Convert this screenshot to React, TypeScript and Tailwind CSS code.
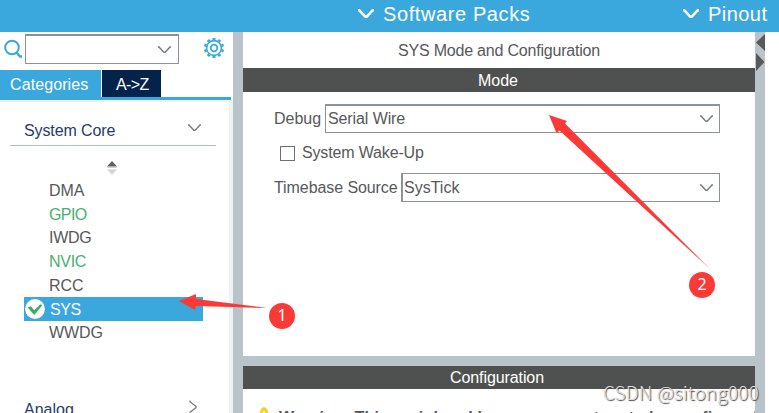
import type { ReactNode } from 'react';

function Chevron({ className, width = 13, stroke = 1.4 }: { className: string; width?: number; stroke?: number }) {
  return (
    <svg className={`shrink-0 ${className}`} width={width} height={(width * 8) / 13} viewBox="0 0 13 8" fill="none" stroke="currentColor" strokeWidth={stroke}>
      <path d="M0 1h1L5.6 5.9Q6.5 6.8 7.4 5.9L12 1h1" />
    </svg>
  );
}

function Select({ value, className }: { value: string; className: string }) {
  return (
    <div className={`flex h-[29px] shrink-0 items-center justify-between border border-[#8b9298] bg-white pr-[6px] pl-[2px] ${className}`}>
      <span>{value}</span>
      <Chevron className="text-[#77797a]" />
    </div>
  );
}

function Header() {
  return (
    <header className="flex h-8 shrink-0 bg-[#3aa8dc] text-[20px] leading-[29px] whitespace-nowrap text-white">
      <div className="flex w-[683px] pl-[358px]">
        <Chevron className="mt-[9px] mr-[9px]" width={16} stroke={2.1} />
        <span className="tracking-[0.6px]">Software Packs</span>
      </div>
      <Chevron className="mt-[9px] mr-[9px]" width={16} stroke={2.1} />
      <span className="tracking-[0.45px]">Pinout</span>
    </header>
  );
}

const teeth = Array.from({ length: 10 }, (_, i) => i * 36);

function Toolbar() {
  return (
    <div className="flex h-[38px] shrink-0 pt-[2px]">
      <svg className="mt-[5px] ml-[3px]" width="21" height="21" viewBox="0 0 21 21" fill="none" stroke="#3aa8dc" strokeWidth="2">
        <circle cx="9" cy="8.5" r="6.8" />
        <path d="M13.5 13.5L17 17.5h2" strokeWidth="2.3" />
      </svg>
      <div className="ml-px flex h-[30px] w-[154px] items-center justify-end border-[#8b9298] pr-[7px] [border-width:2px_1px_1px_1px] border-solid">
        <Chevron className="text-[#77797a]" />
      </div>
      <svg className="mt-[4px] ml-[25px]" width="20" height="20" viewBox="-10 -10 20 20" fill="none" stroke="#3aa8dc" strokeWidth="1.6">
        <circle r="7.4" />
        <circle r="3.3" strokeWidth="1.8" />
        {teeth.map((a) => (
          <path key={a} d="M-1.5-9h3" strokeWidth="2.2" transform={`rotate(${a})`} />
        ))}
      </svg>
    </div>
  );
}

function Check() {
  return (
    <svg className="shrink-0" width="20" height="20" viewBox="0 0 20 20">
      <circle cx="10" cy="10" r="9.9" fill="#fff" />
      <path d="M2.7 8.5l3.2-1.2 3.3 4 6.2-6.1 1.7 1.2-7.8 9.5z" fill="#3aaa64" />
    </svg>
  );
}

function Item({ children, className = 'text-[#57585a]' }: { children: ReactNode; className?: string }) {
  return <li className={`h-[23.7px] pl-[49px] ${className}`}>{children}</li>;
}

function Sidebar() {
  return (
    <aside className="flex w-[233px] shrink-0 flex-col">
      <Toolbar />
      <div className="flex h-[27px] w-[231px] shrink-0 leading-[29px]">
        <div className="w-[101px] bg-[#3aa8dc] pl-[10px] tracking-[0.1px] text-white">Categories</div>
        <div className="ml-px w-[59px] bg-[#03234b] pl-[14px] tracking-[-0.6px] text-white">A-&gt;Z</div>
      </div>
      <div className="h-[3px] w-[231px] shrink-0 bg-[#3aa8dc]" />
      <div className="flex min-h-0 flex-1 flex-col border-t-2 border-r-4 border-[#eef2f4]">
        <div className="ml-[10px] flex h-[44px] w-[206px] shrink-0 items-start justify-between border-b border-[#b0bdc6] pt-[18px] pr-[15px] pl-[14px] text-[#293a69]">
          <span className="leading-[22px] tracking-[-0.1px]">System Core</span>
          <Chevron className="mt-[4px] text-[#77797a]" />
        </div>
        <svg className="mt-[14px] ml-[107px] shrink-0" width="10" height="15" viewBox="0 0 10 15">
          <path d="M5 1L10 6.5H0z" fill="#5d5f60" />
          <path d="M0 7h10v1H0zM0 9.5h10L5 14.5z" fill="#d4d4d4" />
        </svg>
        <ul className="mt-[4px] shrink-0 leading-[23px] tracking-[-0.1px]">
          <Item>DMA</Item>
          <Item className="tracking-[-0.6px] text-[#48b06e]">GPIO</Item>
          <Item className="tracking-[-0.3px] text-[#57585a]">IWDG</Item>
          <Item className="tracking-[-0.3px] text-[#48b06e]">NVIC</Item>
          <Item>RCC</Item>
          <li className="ml-6 flex h-6 w-[179px] items-center bg-[#3aa8dc] pl-px text-white">
            <Check />
            <span className="ml-[5px] tracking-[-0.4px]">SYS</span>
          </li>
          <Item>WWDG</Item>
        </ul>
        <div className="mt-[53px] flex h-6 shrink-0 justify-between pr-[31px] pl-6 text-[#293a69]">
          <span className="leading-6">Analog</span>
          <svg className="mt-[2px]" width="9" height="14" viewBox="0 0 9 14" fill="none" stroke="#77797a" strokeWidth="1.3">
            <path d="M1 .5v1.2L6.8 6.3Q7.6 7 6.8 7.7L1 12.3v1.2" />
          </svg>
        </div>
      </div>
    </aside>
  );
}

function Main() {
  return (
    <main className="flex w-[512px] shrink-0 flex-col overflow-hidden text-[#57585a]">
      <h1 className="h-9 shrink-0 text-center leading-[37px] tracking-[-0.2px]">SYS Mode and Configuration</h1>
      <h2 className="h-6 shrink-0 bg-[#4f5150] pr-[2px] text-center leading-[25px] text-white">Mode</h2>
      <section className="flex h-[264px] shrink-0 flex-col pt-3 pl-[31px]">
        <div className="flex items-center">
          <span className="w-[51px]">Debug</span>
          <Select value="Serial Wire" className="w-[395px] tracking-[-0.1px] [border-top-width:2px]" />
        </div>
        <div className="mt-[8px] flex h-6 items-center pl-[6px]">
          <span className="size-[15px] border-[1.5px] border-[#6c6e70]" />
          <span className="ml-[7px] tracking-[-0.15px]">System Wake-Up</span>
        </div>
        <div className="mt-[8px] flex items-center">
          <span className="w-[127px] tracking-[-0.08px]">Timebase Source</span>
          <Select value="SysTick" className="w-[319px] [border-left-width:2px] !pl-px" />
        </div>
      </section>
      <div className="h-[10px] shrink-0 bg-[#b8c3ca]" />
      <h2 className="h-[23px] shrink-0 bg-[#4f5150] pr-[4px] text-center leading-[23px] tracking-[-0.1px] text-white">Configuration</h2>
      <div className="flex h-6 pt-[17px] pl-[13px] font-bold">
        <svg className="shrink-0" width="18" height="17" viewBox="0 0 18 17">
          <path d="M5.5 2.5Q8 -.7 10.5 2.5L17 16H-1z" fill="#fbd30d" />
          <path d="M7 5h2v6H7z" fill="#fff" />
        </svg>
        <span className="ml-[5px] leading-[24px] tracking-[0.25px] whitespace-nowrap">Warning: This peripheral has no parameters to be configured.</span>
      </div>
    </main>
  );
}

function Badge({ children, className }: { children: string; className: string }) {
  return (
    <span className={`absolute flex size-[26px] items-center justify-center rounded-full bg-[#fb3a38] pb-[2px] font-['Noto_Sans',sans-serif] text-[16px] text-white ${className}`}>
      {children}
    </span>
  );
}

export default function App() {
  return (
    <div className="relative flex h-[413px] w-[779px] flex-col overflow-hidden bg-white font-['Liberation_Sans',Arial,sans-serif] text-[16px] leading-[24px] whitespace-nowrap">
      <Header />
      <div className="flex h-[381px]">
        <Sidebar />
        <div className="w-[10px] shrink-0 bg-[#b8c3ca]" />
        <Main />
        <div className="w-[10px] shrink-0 bg-[#b8c3ca]">
          <svg width="10" height="40" viewBox="0 0 10 40" fill="#57595a">
            <path d="M10 2v17L1 10.5zM1 21l8.5 9L1 39z" />
          </svg>
        </div>
      </div>
      <svg className="absolute inset-0" width="779" height="413" viewBox="0 0 779 413" fill="#fb3a38">
        <path d="M179 301L196 294V299L267 308L196 306L195 310z" />
        <path d="M549 115L567 121L565 123.5L710 269L559.5 130.5L556.5 133z" />
      </svg>
      <Badge className="top-[303px] left-[269px]">1</Badge>
      <Badge className="top-[272px] left-[689px]">2</Badge>
      <span className="absolute top-[379px] left-[603px] font-['Noto_Sans_CJK_SC',sans-serif] text-[19px] leading-[26px] font-light tracking-[0.15px] text-[#dedede] [text-shadow:1px_1px_1px_#444]">CSDN @sitong000</span>
    </div>
  );
}
